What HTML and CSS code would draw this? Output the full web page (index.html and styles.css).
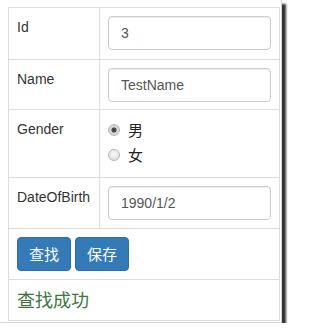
FILE: index.html
```html
<!DOCTYPE html>
<html lang="zh">
<head>
<meta charset="utf-8">
<title>Form</title>
<link rel="stylesheet" href="styles.css">
</head>
<body>
<div class="shot">
  <div class="form">
    <div class="cell label">Id</div>
    <div class="cell"><input class="control" type="text" value="3"></div>

    <div class="cell label">Name</div>
    <div class="cell"><input class="control" type="text" value="TestName"></div>

    <div class="cell label">Gender</div>
    <div class="cell radios">
      <label class="radio"><input type="radio" name="gender" checked><span>男</span></label>
      <label class="radio"><input type="radio" name="gender"><span>女</span></label>
    </div>

    <div class="cell label">DateOfBirth</div>
    <div class="cell"><input class="control" type="text" value="1990/1/2"></div>

    <div class="cell span actions">
      <button class="btn" type="button">查找</button>
      <button class="btn" type="button">保存</button>
    </div>

    <div class="cell span message">查找成功</div>
  </div>
</div>
</body>
</html>
```

FILE: styles.css
```css
body {
  margin: 0;
  background: #fff;
  font-family: "Liberation Sans", Arial, "Noto Sans CJK SC", sans-serif;
  font-size: 14px;
  line-height: 20px;
  color: #333;
}

.shot {
  box-sizing: border-box;
  width: 282px;
  height: 323px;
  padding: 7px 0 0 8px;
  background: #fff;
  border-right: 1px solid #d6d6d6;
  border-bottom: 1px solid #d6d6d6;
  box-shadow: 4px 4px 2px rgba(0, 0, 0, 0.8);
}

.form {
  box-sizing: border-box;
  width: 272px;
  display: grid;
  grid-template-columns: 91px 180px;
  grid-template-rows: 52px 50px 68px 51px 51px 41px;
  border-top: 1px solid #ddd;
  border-left: 1px solid #ddd;
}

.cell {
  box-sizing: border-box;
  padding: 8px;
  border-right: 1px solid #ddd;
  border-bottom: 1px solid #ddd;
}

.label {
  padding-top: 9px;
}

.span {
  grid-column: 1 / 3;
}

.control {
  display: block;
  box-sizing: border-box;
  width: 100%;
  height: 34px;
  margin: 0;
  padding: 6px 12px;
  font: 14px/20px "Liberation Sans", Arial, sans-serif;
  color: #555;
  background: #fff;
  border: 1px solid #ccc;
  border-radius: 4px;
  box-shadow: inset 0 1px 1px rgba(0, 0, 0, 0.075);
}

.radios {
  padding-top: 10px;
}

.radio {
  display: flex;
  align-items: center;
  height: 20px;
  font-family: "Noto Sans CJK SC", sans-serif;
  font-size: 15px;
  color: #222;
}

.radio + .radio {
  margin-top: 5px;
}

.radio input {
  appearance: none;
  -webkit-appearance: none;
  box-sizing: border-box;
  width: 12px;
  height: 12px;
  margin: 0 8px 0 0;
  border: 1px solid #b8b8b8;
  border-radius: 50%;
  background: radial-gradient(circle at 50% 40%, #fbfbfb, #d4d4d4);
}

.radio input:checked {
  background: radial-gradient(circle, #4a4a4a 0 2.2px, #dcdcdc 3px, #c8c8c8);
}

.actions {
  display: flex;
  gap: 4px;
}

.btn {
  box-sizing: border-box;
  width: 54px;
  height: 34px;
  padding: 0;
  background: #337ab7;
  border: 1px solid #2e6da4;
  border-radius: 4px;
  color: #fff;
  font: 15px/20px "Noto Sans CJK SC", sans-serif;
}

.message {
  padding-top: 8px;
  font-family: "Noto Sans CJK SC", sans-serif;
  font-size: 18px;
  line-height: 22px;
  color: #3c763d;
}
```
